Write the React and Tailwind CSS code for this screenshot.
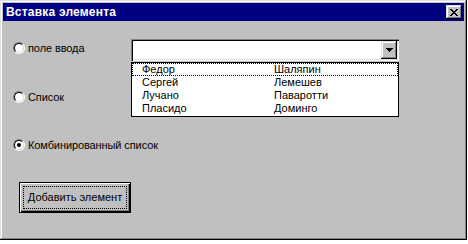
import React from "react";

const raised =
  "shadow-[inset_-1px_-1px_#000,inset_1px_1px_#dfdfdf,inset_-2px_-2px_#808080,inset_2px_2px_#fff]";
const sunken =
  "shadow-[inset_1px_1px_#808080,inset_2px_2px_#000,inset_-1px_-1px_#fff,inset_-2px_-2px_#dfdfdf]";

const singers = [
  ["Федор", "Шаляпин"],
  ["Сергей", "Лемешев"],
  ["Лучано", "Паваротти"],
  ["Пласидо", "Доминго"],
];

function Radio({ label, checked }) {
  return (
    <div className="flex items-center h-[16px] pl-[10px] whitespace-nowrap">
      <div className="w-[12px] h-[12px] shrink-0 rounded-full border border-t-[#808080] border-l-[#808080] border-r-white border-b-white">
        <div className="w-full h-full rounded-full border border-t-black border-l-black border-r-[#dfdfdf] border-b-[#dfdfdf] bg-white flex items-center justify-center">
          {checked && <div className="w-[4px] h-[4px] rounded-full bg-black" />}
        </div>
      </div>
      <span className="ml-[3px] text-black tracking-[-0.1px]">{label}</span>
    </div>
  );
}

export default function App() {
  return (
    <div className="w-[468px] h-[244px] bg-white font-['Liberation_Sans',Arial,sans-serif] text-[11px] leading-none">
      <div className="w-[467px] h-[240px] bg-[#c0c0c0] p-[3px] flex flex-col shadow-[inset_-1px_-1px_#000,inset_1px_1px_#dfdfdf,inset_-2px_-2px_#808080,inset_2px_2px_#fff]">
        {/* title bar */}
        <div className="h-[18px] bg-[#000080] flex items-center justify-between pl-[3px] pr-[2px]">
          <span className="text-white font-bold text-[12px] tracking-[0.2px]">Вставка элемента</span>
          <div className={`w-[16px] h-[14px] bg-[#c0c0c0] ${raised} flex items-center justify-center`}>
            <svg width="8" height="7" viewBox="0 0 8 7" shapeRendering="crispEdges">
              <path
                d="M0 0h2v1h-2zM6 0h2v1h-2zM1 1h2v1h-2zM5 1h2v1h-2zM2 2h4v1h-4zM3 3h2v1h-2zM2 4h4v1h-4zM1 5h2v1h-2zM5 5h2v1h-2zM0 6h2v1h-2zM6 6h2v1h-2z"
                fill="#000"
              />
            </svg>
          </div>
        </div>

        {/* body */}
        <div className="flex flex-1">
          <div className="w-[128px] shrink-0 flex flex-col">
            <div className="mt-[19px]">
              <Radio label="поле ввода" />
            </div>
            <div className="mt-[33px]">
              <Radio label="Список" />
            </div>
            <div className="mt-[32px]">
              <Radio label="Комбинированный список" checked />
            </div>
            <button className="mt-[29px] ml-[16px] w-[112px] h-[31px] shrink-0 border border-black bg-[#c0c0c0] shadow-[inset_1px_1px_#fff,inset_-1px_-1px_#000,inset_-2px_-2px_#808080] p-[3px]">
              <div className="w-full h-full border border-dotted border-black flex items-center justify-center text-black whitespace-nowrap">
                Добавить элемент
              </div>
            </button>
          </div>

          {/* combobox */}
          <div className="relative mt-[18px] w-[268px] h-[22px]">
            <div className={`w-full h-full bg-white ${sunken} flex justify-end p-[2px]`}>
              <div className={`w-[16px] h-[18px] bg-[#c0c0c0] ${raised} flex items-center justify-center`}>
                <svg width="7" height="4" viewBox="0 0 7 4" shapeRendering="crispEdges">
                  <path d="M0 0h7v1h-7zM1 1h5v1h-5zM2 2h3v1h-3zM3 3h1v1h-1z" fill="#000" />
                </svg>
              </div>
            </div>
            <div className="absolute left-0 top-[23px] w-[268px] h-[55px] bg-white border border-black">
              {singers.map(([a, b], i) => (
                <div
                  key={a}
                  className={`h-[13px] flex items-center text-black ${
                    i === 0 ? "border border-dotted border-black" : "border border-transparent"
                  }`}
                >
                  <span className="w-[141px] pl-[9px]">{a}</span>
                  <span>{b}</span>
                </div>
              ))}
            </div>
          </div>
        </div>
      </div>
    </div>
  );
}
